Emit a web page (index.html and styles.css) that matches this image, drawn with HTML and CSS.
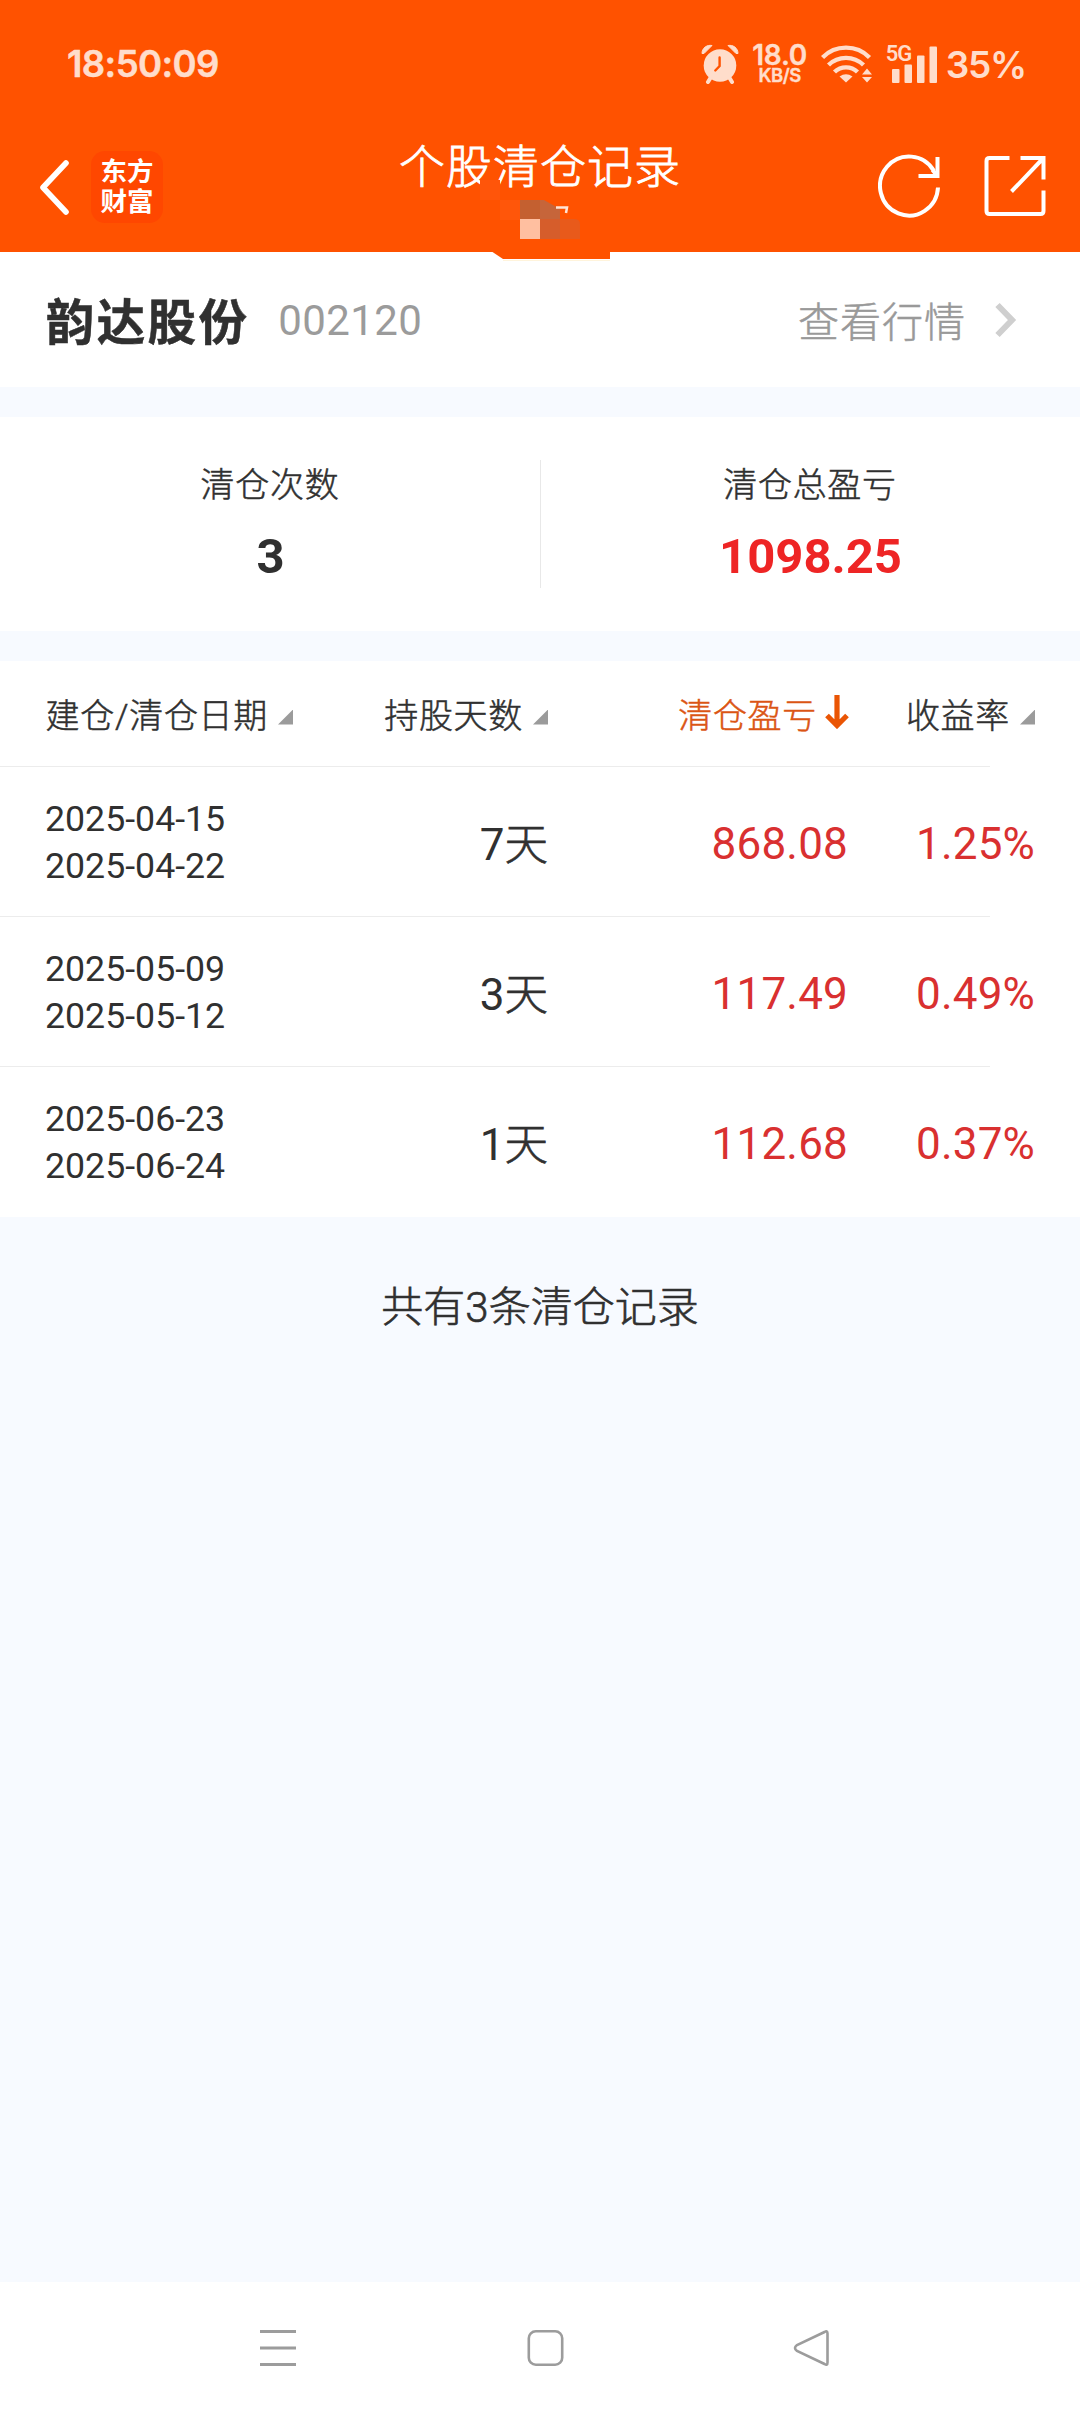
FILE: index.html
```html
<!DOCTYPE html>
<html lang="zh-CN">
<head>
<meta charset="utf-8">
<title>个股清仓记录</title>
<link rel="stylesheet" href="styles.css">
</head>
<body>
<header class="top">
  <div class="status">
    <span class="clock">18:50:09</span>
    <div class="indicators">
      <svg class="alarm" width="38" height="40" viewBox="0 0 38 40">
        <circle cx="19" cy="21.500" r="16.300" fill="#ffddcb"/>
        <path d="M10 33l-3 5M28 33l3 5" stroke="#ffddcb" stroke-width="4" stroke-linecap="round"/>
        <path d="M1 9.500C1 4 6 .5 11 1.500L3 9.500ZM37 9.500C37 4 32 .5 27 1.500L35 9.500Z" fill="#ffddcb" stroke="#ffddcb" stroke-width="1" stroke-linejoin="round"/>
        <path d="M18.600 13.500V22L14.300 26.500" fill="none" stroke="#ff5200" stroke-width="2.400" stroke-linecap="round"/>
      </svg>
      <div class="speed"><span class="rate">18.0</span><span class="unit">KB/S</span></div>
      <svg class="wifi" width="52" height="38" viewBox="0 0 52 38">
        <g fill="none" stroke="#ffddcb" stroke-width="4.400">
          <path d="M1.500 12.500A33 33 0 0 1 48.500 12.500"/>
          <path d="M7.500 20A25 25 0 0 1 42.500 20"/>
          <path d="M13.500 27A16.500 16.500 0 0 1 36.500 27"/>
        </g>
        <path d="M18.500 31.500Q25 27 31.500 31.500L25 37.500Z" fill="#ffddcb"/>
        <path d="M41 29.500L46 23.500L51 29.500ZM41 32L46 37.500L51 32Z" fill="#ffddcb"/>
      </svg>
      <div class="cell">
        <span class="gen">5G</span>
        <svg width="46" height="38" viewBox="0 0 46 38" fill="#ffddcb"><rect y="24" width="7.500" height="14" rx="1"/><rect x="12.500" y="19.500" width="7.500" height="18.500" rx="1"/><rect x="25" y="10.500" width="7.500" height="27.500" rx="1"/><rect x="37.500" y="1.500" width="7.500" height="36.500" rx="1"/></svg>
      </div>
      <span class="battery">35%</span>
    </div>
  </div>
  <div class="bar">
    <div class="bar-left">
      <svg width="33" height="56" viewBox="0 0 33 56"><path d="M27 4L4 28.500L27 53" fill="none" stroke="#fff" stroke-width="5.600" stroke-linecap="round" stroke-linejoin="round"/></svg>
      <div class="logo"><span>东方</span><span>财富</span></div>
    </div>
    <h1 class="title">个股清仓记录</h1>
    <div class="bar-right">
      <svg width="64" height="64" viewBox="0 0 64 64" fill="none" stroke="#fff" stroke-width="4"><path d="M60 33.500A29 29.500 0 1 1 56 17"/><path d="M59.500 3V22H40.500"/><path d="M54.500 16L59 21.500"/></svg>
      <svg width="62" height="62" viewBox="0 0 62 62" fill="none" stroke="#fff" stroke-width="4"><path d="M25.500 3H5.500Q2.500 3 2.500 6V56Q2.500 59 5.500 59H56.500Q59.500 59 59.500 56V35.500"/><path d="M36.500 3H59.500V24.500M58.500 4L27.500 36.500"/></svg>
    </div>
  </div>
  <svg class="tab" width="140" height="86" viewBox="0 0 140 86">
    <path d="M11 75L23 83H130V75Z" fill="#ff5200"/>
    <path d="M23 84.500H130" stroke="#fff4dc"/>
    <path d="M0 4H20V24H0Z" fill="#ff550a"/><path d="M20 24H40V44H20Z" fill="#ff560a"/>
    <path d="M40 24H64L80 33V43H40Z" fill="#c6653a"/><path d="M40 24H60V43H40Z" fill="#c46030"/>
    <path d="M40 43H60V63H40Z" fill="#ffbfa0"/><path d="M60 43H80V63H60Z" fill="#d65d2b"/>
    <path d="M80 43H94Q100 43 100 48V63H80Z" fill="#e85a1b"/>
    <path d="M76 31.500H87L86 37" fill="none" stroke="#ffe5d6" stroke-width="2.500"/>
  </svg>
</header>
<main class="page">
  <section class="stock">
    <h2 class="name">韵达股份</h2>
    <span class="code">002120</span>
    <a class="quote">查看行情<svg width="22" height="36" viewBox="0 0 22 36"><path d="M2.500 3L17 18L2.500 33" fill="none" stroke="#cfcfcf" stroke-width="6"/></svg></a>
  </section>
  <section class="stats">
    <div class="stat"><span class="label">清仓次数</span><b class="value">3</b></div>
    <div class="stat"><span class="label">清仓总盈亏</span><b class="value gain">1098.25</b></div>
  </section>
  <section class="records">
    <div class="row head">
      <span class="sort">建仓/清仓日期<i class="tri"></i></span>
      <span class="sort">持股天数<i class="tri"></i></span>
      <span class="sort active">清仓盈亏<svg width="24" height="34" viewBox="0 0 24 34"><path d="M12 0V31M2 20.500L12 30.500L22 20.500" fill="none" stroke="#ea5504" stroke-width="5.200"/></svg></span>
      <span class="sort">收益率<i class="tri"></i></span>
    </div>
    <div class="row"><div class="dates"><span>2025-04-15</span><span>2025-04-22</span></div><span class="held">7<span class="day">天</span></span><span class="red">868.08</span><span class="red">1.25%</span></div>
    <div class="row"><div class="dates"><span>2025-05-09</span><span>2025-05-12</span></div><span class="held">3<span class="day">天</span></span><span class="red">117.49</span><span class="red">0.49%</span></div>
    <div class="row"><div class="dates"><span>2025-06-23</span><span>2025-06-24</span></div><span class="held">1<span class="day">天</span></span><span class="red">112.68</span><span class="red">0.37%</span></div>
  </section>
  <p class="total">共有3条清仓记录</p>
</main>
<nav class="nav">
  <svg width="38" height="38" viewBox="0 0 38 38" stroke="#9c9c9c" stroke-width="3"><path d="M1 2.500H37M1 19H37M1 35.500H37"/></svg>
  <svg width="38" height="38" viewBox="0 0 38 38" fill="none" stroke="#9c9c9c" stroke-width="2.600"><rect x="2.800" y="2.300" width="33.400" height="33.400" rx="7"/></svg>
  <svg width="38" height="38" viewBox="0 0 38 38" fill="none" stroke="#9c9c9c" stroke-width="2.600"><path d="M31.500 3Q34.500 1 34.500 4.500V33.500Q34.500 37 31.500 35L4 22Q0 19 4 16Z"/></svg>
</nav>
</body>
</html>
```
FILE: styles.css
```css
* { box-sizing: border-box; }
body {
  margin: 0;
  width: 1080px;
  height: 2414px;
  display: flex;
  flex-direction: column;
  background: #f7faff;
  color: #303030;
  font-family: Roboto, "Noto Sans CJK SC", sans-serif;
}
svg { display: block; flex: none; }
h1, h2, p { margin: 0; font-weight: 400; }

.top { position: relative; height: 252px; background: #ff5200; color: #fff; }
.status {
  height: 128px;
  padding: 0 54px 0 67px;
  display: flex;
  align-items: center;
  justify-content: space-between;
  color: #ffddcb;
  font-family: Inter, sans-serif;
  font-weight: 600;
}
.clock { font-size: 36.5px; letter-spacing: -.6px; -webkit-text-stroke: .5px; }
.indicators { display: flex; align-items: center; }
.alarm { margin-right: 14px; }
.speed { width: 54px; display: flex; flex-direction: column; align-items: center; }
.rate { font-size: 28px; line-height: 22px; letter-spacing: -.3px; -webkit-text-stroke: .4px; }
.unit { font-size: 18.5px; line-height: 18px; letter-spacing: -.5px; -webkit-text-stroke: .4px; }
.wifi { margin: 0 13px 0 14px; }
.cell { position: relative; padding-left: 6px; }
.gen { position: absolute; left: 0; top: 0; font: 600 22px/18px Roboto, sans-serif; letter-spacing: -1px; }
.battery { margin-left: 8px; font-size: 37px; line-height: 40px; padding-top: 2px; font-weight: 600; letter-spacing: -1.2px; }

.bar { height: 116px; display: grid; grid-template-columns: 300px 1fr 300px; align-items: center; }
.bar-left { display: flex; align-items: center; gap: 19px; padding: 2px 0 0 39px; }
.logo {
  width: 72px;
  height: 72px;
  border-radius: 14px;
  background: #ff4700;
  display: flex;
  flex-direction: column;
  align-items: center;
  justify-content: center;
  font-size: 26.5px;
  line-height: 30px;
  font-weight: 700;
}
.title { text-align: center; font-size: 46px; line-height: 60px; letter-spacing: 1px; padding-bottom: 39px; font-weight: 300; -webkit-text-stroke: .8px; }
.bar-right { display: flex; align-items: center; justify-content: flex-end; gap: 42px; padding-right: 34px; }
.tab { position: absolute; left: 480px; top: 176px; }

.page { flex: 1; }
.stock { height: 135px; padding: 0 63px 2px 46px; display: flex; align-items: center; background: #fff; }
.name { font-size: 48.5px; font-weight: 700; letter-spacing: 2.3px; -webkit-text-stroke: .5px; }
.code { margin: 4px 0 0 29px; font-size: 42px; letter-spacing: .4px; color: #9b9b9b; }
.quote { margin-left: auto; display: flex; align-items: center; gap: 29px; font-size: 41px; font-weight: 300; -webkit-text-stroke: .5px; letter-spacing: 1px; color: #999; }
.quote svg { margin-top: 2px; }

.stats { height: 214px; margin: 30px 0 30px; display: flex; background: #fff; }
.stat { flex: 1; display: flex; flex-direction: column; align-items: center; padding-top: 43px; position: relative; }
.stat + .stat::before { content: ""; position: absolute; left: 0; top: 43px; width: 1px; height: 128px; background: #e8e8e8; }
.label { font-size: 34px; line-height: 50px; letter-spacing: .7px; font-weight: 300; -webkit-text-stroke: .5px; }
.value { font-size: 49px; line-height: 60px; margin-top: 17px; padding-left: 1px; }
.gain { color: #ee2525; }

.records { background: #fff; }
.row {
  height: 150px;
  padding: 0 45px;
  display: grid;
  grid-template-columns: 248px 255px 299px 188px;
  align-items: center;
  text-align: right;
  font-size: 44px;
  background: linear-gradient(#ececec, #ececec) 0 100% / 990px 1px no-repeat;
}
.row:last-child { background: none; }
.row.head { height: 106px; padding-bottom: 2px; }
.dates { display: flex; flex-direction: column; text-align: left; font-size: 35.7px; line-height: 47px; padding-top: 1px; }
.held { padding-bottom: 2px; }
.day { font-size: 43.5px; font-weight: 300; -webkit-text-stroke: .7px; }
.red { color: #d93030; padding-top: 4px; margin-right: -1px; letter-spacing: .2px; }
.red:last-child { margin-right: 0; }
.sort { display: flex; justify-content: flex-end; align-items: center; font-size: 34px; font-weight: 300; -webkit-text-stroke: .5px; letter-spacing: .7px; white-space: nowrap; }
.sort svg { margin: 0 -2px 2px 8px; }
.tri { margin: 8px 0 0 10px; width: 15px; height: 15px; background: #9b9b9b; clip-path: polygon(100% 0, 100% 100%, 0 100%); }
.active { color: #db5514; }
.total { margin-top: 61px; text-align: center; font-size: 42px; line-height: 60px; font-weight: 300; -webkit-text-stroke: .6px; }

.nav { height: 132px; background: #fff; display: flex; justify-content: center; gap: 229px; padding: 47px 0 0 10px; }
```
